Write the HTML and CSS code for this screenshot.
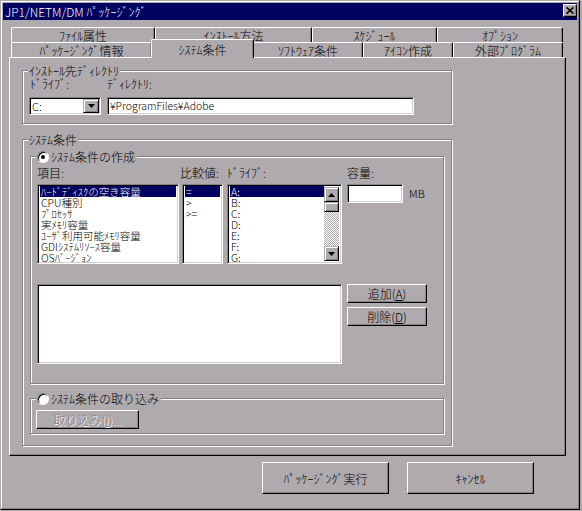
FILE: index.html
```html
<!DOCTYPE html>
<html lang="ja">
<head>
<meta charset="utf-8">
<title>JP1/NETM/DM ﾊﾟｯｹｰｼﾞﾝｸﾞ</title>
<link rel="stylesheet" href="styles.css">
</head>
<body>
<div class="window">
  <div class="frame">
    <div class="titlebar">
      <span class="title">JP1/NETM/DM ﾊﾟｯｹｰｼﾞﾝｸﾞ</span>
      <span class="close-btn"><svg width="8" height="7" viewBox="0 0 8 7"><path d="M0.6 0.4 L7.4 6.6 M7.4 0.4 L0.6 6.6" stroke="#000" stroke-width="1.6" fill="none"/></svg></span>
    </div>

    <div class="tabs">
      <div class="tab-row">
        <div class="tab t144">ﾌｧｲﾙ属性</div>
        <div class="tab t157">ｲﾝｽﾄｰﾙ方法</div>
        <div class="tab t125">ｽｹｼﾞｭｰﾙ</div>
        <div class="tab t126">ｵﾌﾟｼｮﾝ</div>
      </div>
      <div class="tab-row">
        <div class="tab t141">ﾊﾟｯｹｰｼﾞﾝｸﾞ情報</div>
        <div class="tab selected">ｼｽﾃﾑ条件</div>
        <div class="tab t110">ｿﾌﾄｳｪｱ条件</div>
        <div class="tab t90">ｱｲｺﾝ作成</div>
        <div class="tab t110">外部ﾌﾟﾛｸﾞﾗﾑ</div>
      </div>
    </div>

    <div class="panel">
      <div class="group g-install">
        <div class="group-label">ｲﾝｽﾄｰﾙ先ﾃﾞｨﾚｸﾄﾘ</div>
        <div class="install-row">
          <div class="col-drive">
            <div class="lbl lbl-drive">ﾄﾞﾗｲﾌﾞ:</div>
            <div class="combo">
              <span class="combo-text">C:</span>
              <span class="sbtn combo-btn"><svg width="7" height="4" viewBox="0 0 7 4"><polygon points="0,0 7,0 3.5,4" fill="#000"/></svg></span>
            </div>
          </div>
          <div class="col-dir">
            <div class="lbl">ﾃﾞｨﾚｸﾄﾘ:</div>
            <div class="sunken field dir-field">¥ProgramFiles¥Adobe</div>
          </div>
        </div>
      </div>

      <div class="group g-sys">
        <div class="group-label">ｼｽﾃﾑ条件</div>

        <div class="group g-create">
          <div class="group-label radio-label"><span class="radio checked"></span><span>ｼｽﾃﾑ条件の作成</span></div>
          <div class="cond-labels">
            <span class="cl-item">項目:</span>
            <span class="cl-cmp">比較値:</span>
            <span class="cl-drive">ﾄﾞﾗｲﾌﾞ:</span>
            <span class="cl-cap">容量:</span>
          </div>
          <div class="cond-lists">
            <div class="sunken listbox list-item">
              <div class="item sel">ﾊｰﾄﾞﾃﾞｨｽｸの空き容量</div>
              <div class="item">CPU種別</div>
              <div class="item">ﾌﾟﾛｾｯｻ</div>
              <div class="item">実ﾒﾓﾘ容量</div>
              <div class="item">ﾕｰｻﾞ利用可能ﾒﾓﾘ容量</div>
              <div class="item">GDIｼｽﾃﾑﾘｿｰｽ容量</div>
              <div class="item">OSﾊﾞｰｼﾞｮﾝ</div>
            </div>
            <div class="sunken listbox list-cmp">
              <div class="item sel">=</div>
              <div class="item">&gt;</div>
              <div class="item">&gt;=</div>
            </div>
            <div class="sunken listbox list-drive">
              <div class="drive-items">
                <div class="item sel">A:</div>
                <div class="item">B:</div>
                <div class="item">C:</div>
                <div class="item">D:</div>
                <div class="item">E:</div>
                <div class="item">F:</div>
                <div class="item">G:</div>
              </div>
              <div class="scrollbar">
                <span class="sbtn sb-arrow"><svg width="7" height="4" viewBox="0 0 7 4"><polygon points="0,4 7,4 3.5,0" fill="#000"/></svg></span>
                <span class="sbtn sb-thumb"></span>
                <span class="sb-track"></span>
                <span class="sbtn sb-arrow"><svg width="7" height="4" viewBox="0 0 7 4"><polygon points="0,0 7,0 3.5,4" fill="#000"/></svg></span>
              </div>
            </div>
            <div class="sunken field cap-field"></div>
            <span class="mb">MB</span>
          </div>
          <div class="cond-bottom">
            <div class="sunken listbox big-list"></div>
            <div class="side-btns">
              <div class="btn side-btn">追加(<u>A</u>)</div>
              <div class="btn side-btn">削除(<u>D</u>)</div>
            </div>
          </div>
        </div>

        <div class="group g-import">
          <div class="group-label radio-label"><span class="radio"></span><span>ｼｽﾃﾑ条件の取り込み</span></div>
          <div class="btn import-btn disabled">取り込み(<u>I</u>)...</div>
        </div>
      </div>
    </div>

    <div class="footer">
      <div class="btn big-btn">ﾊﾟｯｹｰｼﾞﾝｸﾞ実行</div>
      <div class="btn big-btn">ｷｬﾝｾﾙ</div>
    </div>
  </div>
</div>
</body>
</html>
```

FILE: styles.css
```css
* { box-sizing: border-box; }

body {
  margin: 0;
  background: #aeaaae;
  font-family: "Noto Sans CJK JP", "Liberation Sans", sans-serif;
  font-size: 12px;
  font-weight: 300;
  color: #000;
}

.window {
  width: 580px;
  height: 510px;
  background: #aeaaae;
  border: 1px solid;
  border-color: #aeaaae #000 #000 #aeaaae;
}

.frame {
  height: 100%;
  border: 1px solid;
  border-color: #fff #848084 #848084 #fff;
  padding: 1px;
}

/* title bar */
.titlebar {
  height: 17px;
  background: #000060;
  color: #fff;
  display: flex;
  justify-content: space-between;
  align-items: flex-start;
  padding: 0 0 0 2px;
}
.title { line-height: 17px; font-size: 12px; white-space: nowrap; }
.close-btn {
  margin-top: 1px;
  width: 14px;
  height: 13px;
  background: #aeaaae;
  border: 1px solid;
  border-color: #fff #000 #000 #fff;
  box-shadow: inset -1px -1px 0 #848084;
  display: flex;
  align-items: center;
  justify-content: center;
}
.close-btn svg { display: block; }

/* tabs */
.tabs { margin-top: 7px; padding-left: 8px; }
.tab-row { display: flex; height: 15px; align-items: flex-start; }
.tab {
  height: 15px;
  flex: none;
  border-top: 1px solid #fff;
  border-left: 1px solid #fff;
  border-right: 1px solid #000;
  box-shadow: inset -1px 0 0 #848084;
  border-top-left-radius: 2px;
  border-top-right-radius: 2px;
  text-align: center;
  padding-top: 2px;
  line-height: 12px;
  white-space: nowrap;
}
.t90 { width: 90px; }
.t110 { width: 110px; }
.t125 { width: 125px; }
.t126 { width: 126px; }
.t141 { width: 141px; }
.t144 { width: 144px; }
.t157 { width: 157px; }
.tab.selected {
  width: 103px;
  height: 19px;
  margin: -3px -1px 0 -1px;
  padding-top: 3px;
  line-height: 13px;
  position: relative;
  z-index: 1;
  background: #aeaaae;
}

/* panel */
.panel {
  margin-left: 6px;
  width: 557px;
  height: 399px;
  border: 1px solid;
  border-color: #fff #000 #000 #fff;
  box-shadow: inset -1px -1px 0 #848084;
  padding: 12px 0 0 12px;
}

.group {
  border: 1px solid #848084;
  box-shadow: inset 1px 1px 0 #fff, 1px 1px 0 #fff;
}
.group-label {
  width: fit-content;
  height: 13px;
  line-height: 13px;
  margin: -7px 0 0 5px;
  padding: 0 1px;
  background: #aeaaae;
  white-space: nowrap;
}

.g-install { width: 430px; height: 54px; }
.install-row { display: flex; margin-left: 6px; gap: 6px; }
.col-drive { width: 72px; }
.lbl { line-height: 13px; height: 13px; }
.lbl-drive { padding-left: 1px; }

.sunken {
  border: 1px solid;
  border-color: #848084 #fff #fff #848084;
  box-shadow: inset 1px 1px 0 #000, inset -1px -1px 0 #d2ced2;
  background: #fff;
}

.combo {
  margin-top: 7px;
  width: 72px;
  height: 18px;
  padding: 1px;
  display: flex;
  border: 1px solid;
  border-color: #848084 #fff #fff #848084;
  box-shadow: inset 1px 1px 0 #000, inset -1px -1px 0 #d2ced2;
  background: #fff;
}
.combo-text { flex: 1; padding-left: 1px; line-height: 14px; font-size: 11px; }

.sbtn {
  background: #aeaaae;
  border: 1px solid;
  border-color: #aeaaae #000 #000 #aeaaae;
  box-shadow: inset 1px 1px 0 #fff, inset -1px -1px 0 #848084;
  display: flex;
  align-items: center;
  justify-content: center;
  flex: none;
}
.sbtn svg { display: block; }
.combo-btn { width: 16px; height: 14px; }

.field { height: 18px; padding: 0 2px; line-height: 16px; font-size: 10.5px; white-space: nowrap; }
.dir-field { margin-top: 7px; width: 307px; }

.g-sys { margin-top: 15px; width: 430px; height: 307px; }

.g-create { margin: 10px 0 0 7px; width: 414px; height: 228px; }
.radio-label {
  display: flex;
  align-items: center;
  gap: 2px;
  padding: 0 2px 0 1px;
}
.radio {
  width: 12px;
  height: 12px;
  flex: none;
  border-radius: 50%;
  background: #fff;
  border: 1px solid;
  border-color: #848084 #fff #fff #848084;
  box-shadow: inset 1px 1px 0 #000;
  display: flex;
  align-items: center;
  justify-content: center;
}
.radio.checked::after {
  content: "";
  width: 4px;
  height: 4px;
  border-radius: 50%;
  background: #000;
}

.cond-labels { display: flex; margin: 3px 0 0 6px; line-height: 13px; height: 13px; white-space: nowrap; }
.cl-item { width: 143px; }
.cl-cmp { width: 47px; }
.cl-drive { width: 120px; }

.cond-lists { display: flex; align-items: flex-start; margin: 5px 0 0 6px; }
.listbox {
  padding: 1px 2px 0;
  overflow: hidden;
  font-size: 10.5px;
  line-height: 11px;
}
.item { height: 11px; padding-left: 1px; white-space: nowrap; }
.item.sel { background: #000060; color: #fff; }
.list-item { width: 142px; height: 80px; }
.list-cmp { width: 41px; height: 80px; margin-left: 3px; }
.list-drive { width: 115px; height: 80px; margin-left: 4px; display: flex; padding: 2px; }
.drive-items { flex: 1; margin-top: -1px; }
.scrollbar { width: 15px; display: flex; flex-direction: column; }
.sb-arrow { width: 15px; height: 15px; }
.sb-thumb { width: 15px; height: 10px; }
.sb-track {
  flex: 1;
  background: repeating-conic-gradient(#fff 0 25%, #aeaaae 0 50%) 0 0 / 2px 2px;
}
.cap-field { width: 56px; height: 19px; margin-left: 5px; }
.mb { margin-left: 6px; line-height: 19px; font-size: 11px; }

.cond-bottom { display: flex; align-items: flex-start; margin: 20px 0 0 6px; }
.big-list { width: 305px; height: 80px; }
.side-btns { margin-left: 5px; display: flex; flex-direction: column; gap: 4px; }

.btn {
  background: #aeaaae;
  border: 1px solid;
  border-color: #fff #000 #000 #fff;
  box-shadow: inset -1px -1px 0 #848084;
  display: flex;
  align-items: center;
  justify-content: center;
  white-space: nowrap;
}
.side-btn { width: 80px; height: 19px; }

.g-import { margin: 14px 0 0 7px; width: 414px; height: 36px; }
.import-btn { margin: 5px 0 0 5px; width: 103px; height: 19px; }
.disabled { color: #848084; text-shadow: 1px 1px 0 #fff; }

.footer { display: flex; gap: 18px; margin-top: 6px; padding-left: 259px; }
.big-btn { width: 127px; height: 32px; }
```
